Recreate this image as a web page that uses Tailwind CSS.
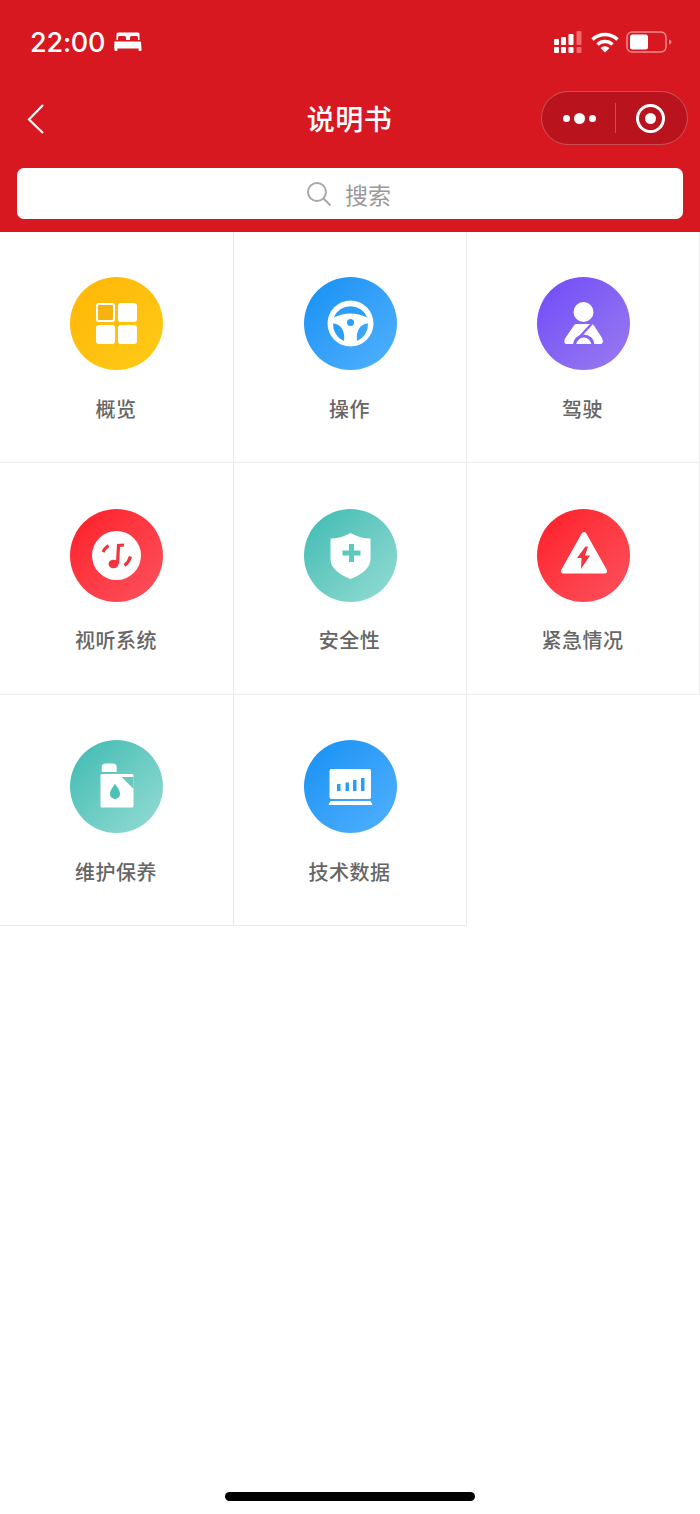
<!DOCTYPE html>
<html lang="zh-CN">
<head>
<meta charset="utf-8">
<title>说明书</title>
<script src="https://cdn.jsdelivr.net/npm/@tailwindcss/browser@4"></script>
</head>
<body class="bg-white">
<div class="relative flex h-[1514px] w-[700px] flex-col overflow-hidden bg-white font-['Noto_Sans_CJK_SC','Noto_Sans',sans-serif]">
  <header class="h-[232px] shrink-0 bg-[#d71821] text-white">
    <div class="flex h-[84px] items-center justify-between pl-[30px] pr-[28px]">
      <div class="flex items-center gap-[9px]">
        <span class="font-['Inter',sans-serif] text-[27px] leading-none font-medium tracking-[-0.2px]">22:00</span>
        <svg class="w-[28px] h-[19px] mt-[-1px]" viewBox="0 0 28 19" fill="#fff"><path d="M4 0.500h20a1.500 1.500 0 0 1 1.500 1.500v6h-1.500v-2.500a1.500 1.500 0 0 0-1.500-1.500h-5a1.500 1.500 0 0 0-1.500 1.500v2.500h-4v-2.500a1.500 1.500 0 0 0-1.500-1.500h-5a1.500 1.500 0 0 0-1.500 1.500v2.500h-1.500v-6a1.500 1.500 0 0 1 1.500-1.500z"/><path d="M2 9.500h24a1 1 0 0 1 1 1.500l.5 5.500h-27.500l.5-5.500a1 1 0 0 1 1.500-1.500z"/><rect x="0.500" y="16" width="3" height="3" rx="1"/><rect x="24.500" y="16" width="3" height="3" rx="1"/></svg>
      </div>
      <div class="flex items-center">
        <svg class="w-[29px] h-[23px]" viewBox="0 0 29 23" fill="#fff"><rect x="0" y="8" width="5" height="6" rx="1"/><rect x="7" y="6" width="5" height="8" rx="1"/><rect x="14.500" y="3" width="5" height="11" rx="1"/><rect x="22.500" y="0" width="5" height="14" rx="1" fill="#ef6a6f"/><rect x="0" y="16" width="5" height="6" rx="1"/><rect x="7" y="16" width="5" height="6" rx="1"/><rect x="14.500" y="16" width="5" height="6" rx="1"/><rect x="22.500" y="16" width="5" height="6" rx="1" fill="#ef6a6f"/></svg>
        <svg class="ml-[8px] w-[28px] h-[21px]" viewBox="0 0 28 21" fill="none" stroke="#fff" stroke-width="3.400"><path d="M1.500 7.500a18 18 0 0 1 25 0"/><path d="M6.500 12.500a11 11 0 0 1 15 0"/><path d="M14 20.500l-4.500-4.500a6.500 6.500 0 0 1 9 0z" fill="#fff" stroke="none"/></svg>
        <svg class="ml-[7px] w-[46px] h-[22px]" viewBox="0 0 46 22" fill="none"><rect x="1" y="1" width="39" height="20" rx="5" stroke="#f28a8e" stroke-width="1.500"/><rect x="4" y="3.500" width="18" height="15" rx="2.500" fill="#fff"/><path d="M43 8.500c1.500.5 2.500 1.500 2.500 2.500s-1 2-2.500 2.500z" fill="#f28a8e"/></svg>
      </div>
    </div>
    <div class="relative flex h-[68px] items-center justify-center">
      <svg class="absolute left-[26px] top-[19px] w-[19px] h-[31px]" viewBox="0 0 19 31" fill="none" stroke="#fff" stroke-width="2.200"><path d="M17 2L3 16.500 17 30"/></svg>
      <h1 class="mt-[-1px] text-[28px] leading-none font-medium tracking-[0.5px] pr-[1px]">说明书</h1>
      <div class="absolute right-[12px] top-[7px] flex h-[54px] w-[147px] items-center rounded-full border border-white/25 bg-[#b9141d]">
        <div class="flex w-[73px] items-center justify-end gap-[4px] pr-[19px]">
          <span class="h-[7px] w-[7px] rounded-full bg-white"></span>
          <span class="h-[11px] w-[11px] rounded-full bg-white"></span>
          <span class="h-[7px] w-[7px] rounded-full bg-white"></span>
        </div>
        <div class="h-[30px] w-px bg-white/25"></div>
        <div class="flex flex-1 items-center justify-center pr-[2px]">
          <span class="flex h-[29px] w-[29px] items-center justify-center rounded-full border-[3.500px] border-white">
            <span class="h-[11px] w-[11px] rounded-full bg-white"></span>
          </span>
        </div>
      </div>
    </div>
    <div class="px-[17px] pt-[16px]">
      <div class="flex h-[51px] items-center justify-center gap-[14px] rounded-[7px] bg-white pr-[2px]">
        <svg class="w-[24px] h-[24px] mt-[1px]" viewBox="0 0 24 24" fill="none" stroke="#a8a8a8" stroke-width="2"><circle cx="10" cy="10" r="9"/><path d="M16.500 16.500L23.500 23.500"/></svg>
        <span class="text-[23px] leading-none mt-[1px] text-[#999999]">搜索</span>
      </div>
    </div>
  </header>

  <main class="grid grid-cols-[234px_233px_233px]">
    <a class="flex h-[231.33px] flex-col items-center border-r border-b border-[#ebebeb] pt-[45.4px]">
      <div class="h-[93px] w-[93px] rounded-full bg-linear-to-br from-[#ffb606] to-[#ffca16]">
        <svg class="h-full w-full" viewBox="0 0 93 93"><rect x="27" y="27" width="17" height="17" rx="2" fill="#f5b210" stroke="#fff" stroke-width="2"/><rect x="48" y="26" width="19" height="19" rx="3" fill="#fff"/><rect x="26" y="48" width="19" height="19" rx="3" fill="#fff"/><rect x="48" y="48" width="19" height="19" rx="3" fill="#fff"/></svg>
      </div>
      <span class="mt-[24.6px] pr-[1px] text-[20px] leading-[28px] font-medium tracking-[0.5px] text-[#666666]">概览</span>
    </a>
    <a class="flex h-[231.33px] flex-col items-center border-r border-b border-[#ebebeb] pt-[45.4px]">
      <div class="h-[93px] w-[93px] rounded-full bg-linear-to-br from-[#0d90f3] to-[#50b1ff]">
        <svg class="h-full w-full" viewBox="0 0 93 93"><circle cx="46.500" cy="46.500" r="23" fill="#fff"/><path d="M29.800 40.500A18 18 0 0 1 63.200 40.500Q46.500 32.500 29.800 40.500Z" fill="#2b9ef8"/><path d="M29 46.500C36 46.500 41.500 53 40 64A18 18 0 0 1 29 46.500Z" fill="#2b9ef8"/><path d="M64 46.500C57 46.500 51.500 53 53 64A18 18 0 0 0 64 46.500Z" fill="#3aa6fb"/><circle cx="46.500" cy="45.500" r="3.500" fill="#2b9ef8"/></svg>
      </div>
      <span class="mt-[24.6px] pr-[1px] text-[20px] leading-[28px] font-medium tracking-[0.5px] text-[#666666]">操作</span>
    </a>
    <a class="flex h-[231.33px] flex-col items-center border-r border-b border-[#ebebeb] pt-[45.4px]">
      <div class="h-[93px] w-[93px] rounded-full bg-linear-to-br from-[#7148f8] to-[#9b7aee]">
        <svg class="h-full w-full" viewBox="0 0 93 93"><circle cx="46.500" cy="35" r="10" fill="#fff"/><path d="M39 47H54Q56 47 57 48.500L65 61Q67.500 67 63 67H30Q26 67 28 61.500L37 48.500Q37.500 47 39 47Z" fill="#fff"/><path d="M54.500 47L38 65" fill="none" stroke="#8764f4" stroke-width="2.500"/><path d="M37.500 68C38.500 56 55 56 56 68" fill="none" stroke="#8764f4" stroke-width="3"/></svg>
      </div>
      <span class="mt-[24.6px] pr-[1px] text-[20px] leading-[28px] font-medium tracking-[0.5px] text-[#666666]">驾驶</span>
    </a>

    <a class="flex h-[231.33px] flex-col items-center border-r border-b border-[#ebebeb] pt-[45.4px]">
      <div class="h-[93px] w-[93px] rounded-full bg-linear-to-br from-[#fe1624] to-[#fc505d]">
        <svg class="h-full w-full" viewBox="0 0 93 93"><circle cx="46.500" cy="46.500" r="24.500" fill="#fff"/><g fill="none" stroke="#f2323f" stroke-width="3.200"><path d="M47.500 55L48.500 36.500L54 36"/><path d="M33 43Q34.500 39.500 38.500 36.500"/><path d="M54.500 56.500Q59 53 60.500 47.500"/></g><ellipse cx="43.500" cy="55" rx="5" ry="4.200" fill="#f2323f"/></svg>
      </div>
      <span class="mt-[24.6px] pr-[1px] text-[20px] leading-[28px] font-medium tracking-[0.5px] text-[#666666]">视听系统</span>
    </a>
    <a class="flex h-[231.33px] flex-col items-center border-r border-b border-[#ebebeb] pt-[45.4px]">
      <div class="h-[93px] w-[93px] rounded-full bg-linear-to-br from-[#38bab2] to-[#93ddd4]">
        <svg class="h-full w-full" viewBox="0 0 93 93"><path d="M46.500 24Q56 29.500 66.500 29.500V50Q66.500 62 46.500 70Q26.500 62 26.500 50V29.500Q37 29.500 46.500 24Z" fill="#fff"/><path d="M45 35H50V41.500H56.500V46.500H50V53H45V46.500H38.500V41.500H45Z" fill="#5cc9bf"/></svg>
      </div>
      <span class="mt-[24.6px] pr-[1px] text-[20px] leading-[28px] font-medium tracking-[0.5px] text-[#666666]">安全性</span>
    </a>
    <a class="flex h-[231.33px] flex-col items-center border-r border-b border-[#ebebeb] pt-[45.4px]">
      <div class="h-[93px] w-[93px] rounded-full bg-linear-to-br from-[#fe1624] to-[#fc505d]">
        <svg class="h-full w-full" viewBox="0 0 93 93"><path d="M47 25.500L26.500 62H67.500Z" fill="#fff" stroke="#fff" stroke-width="5" stroke-linejoin="round"/><path d="M48.500 37.500L40 49H44.500L44 60L53 46.500H48L51 37.500Z" fill="#f4353f"/></svg>
      </div>
      <span class="mt-[24.6px] pr-[1px] text-[20px] leading-[28px] font-medium tracking-[0.5px] text-[#666666]">紧急情况</span>
    </a>

    <a class="flex h-[231.33px] flex-col items-center border-r border-b border-[#ebebeb] pt-[45.4px]">
      <div class="h-[93px] w-[93px] rounded-full bg-linear-to-br from-[#38bab2] to-[#93ddd4]">
        <svg class="h-full w-full" viewBox="0 0 93 93"><path d="M31.700 32V27.500Q31.700 23.500 35.700 23.500H42.700Q46.700 23.500 46.700 27.500V32Z" fill="#fff"/><rect x="30.500" y="34" width="33" height="33.500" rx="1.500" fill="#fff"/><path d="M51.700 37H63.500V49Z" fill="#66c8c0"/><path d="M45 44Q50 50 50 54A5 5 0 0 1 40 54Q40 50 45 44Z" fill="#4dc0b8"/></svg>
      </div>
      <span class="mt-[24.6px] pr-[1px] text-[20px] leading-[28px] font-medium tracking-[0.5px] text-[#666666]">维护保养</span>
    </a>
    <a class="flex h-[231.33px] flex-col items-center border-r border-b border-[#ebebeb] pt-[45.4px]">
      <div class="h-[93px] w-[93px] rounded-full bg-linear-to-br from-[#0d90f3] to-[#50b1ff]">
        <svg class="h-full w-full" viewBox="0 0 93 93"><rect x="25.500" y="29" width="41.500" height="30" rx="2" fill="#fff"/><path d="M26.500 61H66.500L68.500 65H24.500Z" fill="#fff"/><g fill="#2b9ef8"><rect x="33" y="44" width="3.500" height="7"/><rect x="41.500" y="42.500" width="3.500" height="8.500"/><rect x="49" y="40" width="3.500" height="11"/><rect x="57" y="38" width="3.500" height="13"/></g></svg>
      </div>
      <span class="mt-[24.6px] pr-[1px] text-[20px] leading-[28px] font-medium tracking-[0.5px] text-[#666666]">技术数据</span>
    </a>
  </main>

  <div class="mt-auto mb-[13px] h-[9px] w-[250px] self-center rounded-full bg-black"></div>
</div>
</body>
</html>
